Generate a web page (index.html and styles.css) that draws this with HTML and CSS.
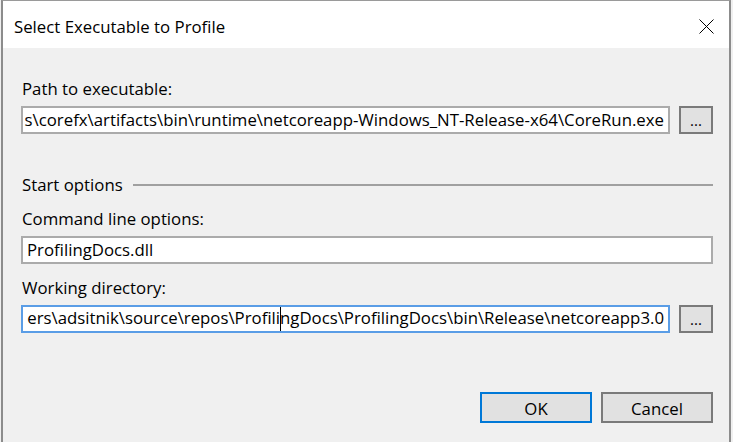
FILE: index.html
```html
<!DOCTYPE html>
<html>
<head>
<meta charset="utf-8">
<link rel="stylesheet" href="styles.css">
</head>
<body>
<div class="window">
  <div class="titlebar">
    <span class="title">Select Executable to Profile</span>
    <svg class="close" width="15" height="15" viewBox="0 0 15 15"><path d="M0.5 0.5 L14.5 14.5 M14.5 0.5 L0.5 14.5" stroke="#000" stroke-width="1" fill="none"/></svg>
  </div>
  <div class="content">
    <div class="label first">Path to executable:</div>
    <div class="row">
      <div class="field narrow"><span class="val">s\corefx\artifacts\bin\runtime\netcoreapp-Windows_NT-Release-x64\CoreRun.exe</span></div>
      <div class="browse">...</div>
    </div>
    <div class="group">
      <span class="group-title">Start options</span>
      <span class="group-line"></span>
    </div>
    <div class="label">Command line options:</div>
    <div class="field wide left"><span class="val">ProfilingDocs.dll</span></div>
    <div class="label">Working directory:</div>
    <div class="row">
      <div class="field narrow focused"><span class="val">ers\adsitnik\source\repos\Profili<span class="caret"></span>ngDocs\ProfilingDocs\bin\Release\netcoreapp3.0</span></div>
      <div class="browse">...</div>
    </div>
    <div class="actions">
      <div class="btn default">OK</div>
      <div class="btn">Cancel</div>
    </div>
  </div>
</div>
</body>
</html>
```

FILE: styles.css
```css
html, body {
  margin: 0;
  padding: 0;
  background: #f0f0f0;
  font-family: "Open Sans", "Noto Sans", sans-serif;
  font-size: 16.8px;
  color: #000;
}
.window {
  margin-left: 1px;
  width: 730px;
  height: 442px;
  box-sizing: border-box;
  border-left: 2px solid #8c8c8c;
  border-right: 2px solid #8c8c8c;
  border-top: 1px solid #9a9a9a;
  background: #f0f0f0;
}
.titlebar {
  height: 47px;
  background: #fff;
  display: flex;
  align-items: center;
  justify-content: space-between;
  padding: 0 15px 0 11px;
}
.title {
  font-size: 16.8px;
  line-height: 20px;
  margin-top: 4px;
}
.close {
  display: block;
  margin-top: 3px;
}
.content {
  padding: 0 16px 0 18px;
}
.label {
  line-height: 20px;
  height: 20px;
  padding-left: 1px;
  margin-top: 14px;
  margin-bottom: 7px;
}
.label.first {
  margin-top: 31px;
}
.row {
  display: flex;
  align-items: center;
  gap: 9px;
}
.field {
  height: 28px;
  box-sizing: border-box;
  border: 2px solid #ababab;
  background: #fff;
  display: flex;
  align-items: center;
  justify-content: flex-end;
  overflow: hidden;
  white-space: nowrap;
  padding: 0 4px 0 0;
  line-height: 24px;
}
.field.narrow {
  width: 649px;
}
.field.wide {
  width: 692px;
}
.field.left {
  justify-content: flex-start;
  padding-left: 4px;
}
.field.focused {
  border-color: #5a9de6;
}
.val {
  flex: none;
}
.caret {
  display: inline-block;
  width: 0;
  height: 25px;
  border-left: 1px solid #000;
  margin-right: -1px;
  vertical-align: middle;
}
.browse {
  width: 34px;
  height: 28px;
  box-sizing: border-box;
  border: 2px solid #7a7a7a;
  background: #e1e1e1;
  text-align: center;
  line-height: 24px;
  font-size: 15px;
}
.group {
  display: flex;
  align-items: center;
  margin-top: 41px;
  height: 20px;
  line-height: 20px;
  padding-left: 1px;
}
.group-line {
  flex: 1;
  height: 2px;
  background: #a0a0a0;
  margin-left: 10px;
  margin-top: -1px;
}
.actions {
  display: flex;
  justify-content: flex-end;
  gap: 9px;
  margin-top: 59px;
}
.btn {
  width: 112px;
  height: 31px;
  box-sizing: border-box;
  border: 2px solid #7a7a7a;
  background: #e1e1e1;
  text-align: center;
  line-height: 29px;
}
.btn.default {
  border-color: #0078d7;
}
```
